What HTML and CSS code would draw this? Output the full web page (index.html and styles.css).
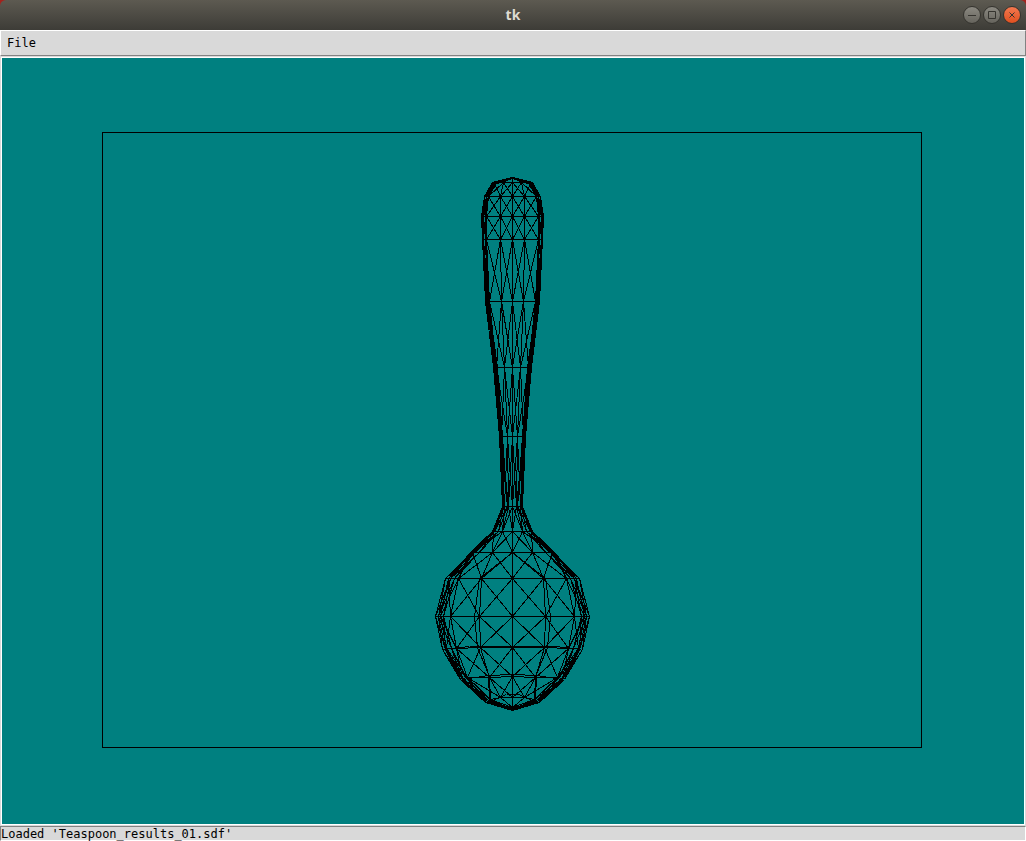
FILE: index.html
```html
<!DOCTYPE html>
<html lang="en">
<head>
<meta charset="utf-8">
<title>tk</title>
<link rel="stylesheet" href="styles.css">
</head>
<body>
<div class="window">
  <header class="titlebar">
    <h1 class="title">tk</h1>
    <div class="controls">
      <button class="control" type="button" aria-label="Minimize"><svg viewBox="0 0 18 18"><path d="M5 9.5h8"/></svg></button>
      <button class="control" type="button" aria-label="Maximize"><svg viewBox="0 0 18 18"><path d="M5.500 5.500h7v7h-7z"/></svg></button>
      <button class="control close" type="button" aria-label="Close"><svg viewBox="0 0 18 18"><path d="M6.500 6.500l5 5m0-5l-5 5"/></svg></button>
    </div>
  </header>
  <nav class="menubar"><button class="menu" type="button">File</button></nav>
  <main class="viewport">
    <svg class="scene" viewBox="0 0 1022 766" role="img" aria-label="Wireframe teaspoon">
      <g transform="translate(-2 -58)">
        <rect x="102.5" y="132.5" width="819" height="615"/>
        <path id="mesh"/>
      </g>
    </svg>
  </main>
  <footer class="status">Loaded 'Teaspoon_results_01.sdf'</footer>
</div>
<script src="mesh.js"></script>
</body>
</html>
```
FILE: styles.css
```css
* { box-sizing: border-box; }
body { margin: 0; background: #a3231d; }
.window { display: flex; flex-direction: column; height: 100vh; }
.titlebar {
  display: grid;
  grid-template-columns: 1fr auto 1fr;
  align-items: center;
  height: 30px;
  padding: 0 5px;
  border-radius: 6px 6px 0 0;
  background: linear-gradient(#5d5a51, #3d3c37);
}
.title {
  grid-column: 2;
  margin: 0;
  font: bold 14px/20px "Noto Sans", "Open Sans", sans-serif;
  color: #dfdbd2;
}
.controls { display: flex; justify-content: flex-end; gap: 2px; }
.control {
  width: 18px;
  height: 18px;
  padding: 0;
  border: 1px solid #35342f;
  border-radius: 50%;
  background: linear-gradient(#8b8981, #66645d);
  color: #35342f;
}
.control svg { display: block; width: 18px; height: 18px; margin: -1px; fill: none; stroke: currentColor; }
.close { background: linear-gradient(#f4784f, #e05020); }
.menubar {
  height: 26px;
  padding: 0 6px;
  background: #d9d9d9;
  border: 1px solid;
  border-color: #fff #828282 #828282 #fff;
}
.menu {
  padding: 0;
  border: 0;
  background: none;
  color: #000;
  font: 12px/24px "DejaVu Sans Mono", monospace;
}
.viewport {
  flex: 1;
  min-height: 0;
  border: 1px solid #d9d9d9;
  background: #fff;
  padding: 1px;
}
.scene {
  display: block;
  width: 100%;
  height: 100%;
  background: #008080;
  fill: none;
  stroke: #000;
  stroke-width: 1;
  shape-rendering: crispEdges;
}
.status {
  height: 15px;
  padding: 0;
  border: 1px solid;
  border-color: #828282 #fff #fff #828282;
  background: #d9d9d9;
  color: #000;
  font: 12px/15px "DejaVu Sans Mono", monospace;
}
```
FILE: mesh.js
```js
// Vertices are [distance from the axis, y], ordered from the axis to the rim.
const axis = 512.5;
const front = [
  [[0, 177], [0, 177], [0, 177], [0, 177]],
  [[0, 182], [9, 182], [18, 183], [20, 182]],
  [[0, 196], [12, 196], [24, 196], [28, 196]],
  [[0, 216], [12, 216], [26, 216], [31, 216]],
  [[0, 239], [12, 239], [26, 239], [30, 239]],
  [[0, 301], [11, 301], [23, 301], [27, 301]],
  [[0, 367], [8, 367], [16, 367], [19, 367]],
  [[0, 436], [5, 436], [11, 436], [13, 436]],
  [[0, 506], [4, 506], [8, 506], [10, 506]],
  [[0, 531], [10, 531], [19, 531], [20, 531]],
  [[0, 552], [20, 552], [40, 552], [42, 552]],
  [[0, 578], [31, 578], [54, 578], [64, 578]],
  [[0, 616], [33, 616], [62, 616], [72, 616]],
  [[0, 647], [32, 647], [56, 648], [66, 648]],
  [[0, 676], [23, 677], [45, 677], [50, 678]],
  [[0, 697], [12, 697], [22, 699], [26, 702]],
  [[0, 707], [0, 707], [0, 707], [0, 710]]
];
const back = [
  [[0, 177], [0, 177], [0, 177], [0, 178]],
  [[0, 182], [16, 183], [18, 184], [20, 183]],
  [[0, 196], [24, 196], [26, 196], [28, 196]],
  [[0, 216], [27, 216], [29, 216], [30, 216]],
  [[0, 239], [27, 239], [29, 239], [30, 239]],
  [[0, 301], [24, 301], [25, 301], [26, 301]],
  [[0, 367], [15, 367], [17, 367], [18, 367]],
  [[0, 436], [10, 436], [12, 436], [13, 436]],
  [[0, 506], [5, 506], [9, 506], [10, 506]],
  [[0, 531], [14, 531], [18, 531], [20, 531]],
  [[0, 552], [34, 553], [39, 553], [41, 552]],
  [[33, 578], [58, 578], [62, 578], [67, 578]],
  [[38, 616], [69, 616], [74, 616], [77, 616]],
  [[35, 647], [61, 648], [67, 649], [70, 649]],
  [[24, 674], [46, 678], [50, 679], [52, 679]],
  [[23, 700], [24, 700], [25, 701], [27, 702]],
  [[0, 709], [0, 708], [0, 709], [0, 710]]
];
let d = "";
function line(a, b) {
  for (const side of [-1, 1]) {
    d += `M${axis + side * a[0]} ${a[1] + 0.5}L${axis + side * b[0]} ${b[1] + 0.5}`;
  }
}
function chain(points) {
  for (let i = 1; i < points.length; i++) line(points[i - 1], points[i]);
}
front.forEach((row, r) => {
  chain(row);
  const next = front[r + 1];
  if (!next) return;
  row.forEach((p, c) => {
    line(p, next[c]);
    if (c < 3) {
      line(p, next[c + 1]);
      line(row[c + 1], next[c]);
    }
  });
});
back.slice(0, -1).forEach((row, r) => {
  const next = back[r + 1];
  row.forEach((p, c) => line(p, next[c]));
  for (const c of [1, 2]) {
    line(row[c], next[c + 1]);
    line(row[c + 1], next[c]);
  }
});
// The bowl's widest ring reaches the rim on both surfaces.
chain([[62, 578], [67, 578]]);
chain([[70, 616], [77, 616]]);
// Curved cross-sections of the bowl's underside.
chain([[0, 646], [43, 646], [69, 649]]);
chain([[0, 674], [24, 675], [50, 679]]);
chain([[0, 694], [6, 694], [15, 698], [25, 702]]);
document.getElementById("mesh").setAttribute("d", d);
```
